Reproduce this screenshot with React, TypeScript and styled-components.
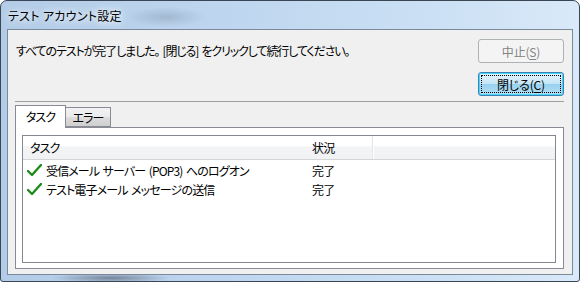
import styled, { createGlobalStyle } from "styled-components"

const GlobalStyle = createGlobalStyle`
    html, body { margin: 0; padding: 0; background: #ffffff; }
    body {
        font-family: "Noto Sans CJK JP", "Noto Sans", sans-serif;
        font-size: 12px;
        font-feature-settings: "palt";
        letter-spacing: -0.85px;
        word-spacing: 1.5px;
        color: #000;
    }
`

type Row = {
    task: string
    status: string
}

const rows: Row[] = [
    { task: "受信メール サーバー (POP3) へのログオン", status: "完了" },
    { task: "テスト電子メール メッセージの送信", status: "完了" },
]

const Window = styled.div`
    box-sizing: border-box;
    width: 580px;
    height: 282px;
    border: 1px solid #3a4654;
    border-radius: 7px 7px 3px 3px;
    padding: 0 6px 6px 6px;
    display: flex;
    flex-direction: column;
    overflow: hidden;
    background:
        radial-gradient(ellipse 60px 5px at 110px 277px, rgba(60, 70, 85, 0.55), transparent),
        radial-gradient(ellipse 40px 10px at 165px 16px, rgba(90, 105, 125, 0.25), transparent),
        linear-gradient(to right, #b3cce7 0%, #bed6ef 40%, #cbe0f4 75%, #d9e9f9 100%);
`
const TitleBar = styled.div`
    height: 28px;
    display: flex;
    align-items: center;
    padding-left: 1px;
`
const Title = styled.span`
    font-size: 12px;
    letter-spacing: 0.3px;
    word-spacing: 0;
    text-shadow: 0 0 6px #ffffff, 0 0 10px #ffffff;
`
const Client = styled.div`
    flex: 1;
    display: flex;
    flex-direction: column;
    border: 1px solid #7b8a9b;
    background: #f0f0f0;
    padding: 9px 8px 5px 7px;
    min-height: 0;
`
const TopRow = styled.div`
    display: flex;
    align-items: flex-start;
`
const Message = styled.div`
    flex: 1;
    line-height: 24px;
    padding-left: 1px;
    letter-spacing: -1.1px;
`
const ButtonColumn = styled.div`
    width: 86px;
    display: flex;
    flex-direction: column;
    gap: 9px;
`
const Button = styled.button<{ $primary?: boolean; $disabled?: boolean }>`
    box-sizing: border-box;
    height: 24px;
    width: 100%;
    font: inherit;
    font-size: 12px;
    letter-spacing: -0.2px;
    border-radius: 3px;
    padding: 0;
    position: relative;
    color: ${p => (p.$disabled ? "#838383" : "#000")};
    border: 1px solid ${p => (p.$primary ? "#3c7fb1" : "#adb2b5")};
    background: ${p =>
        p.$primary
            ? "linear-gradient(#e5f4fc 0%, #c4e5f6 50%, #98d1ef 51%, #b6e0f5 100%)"
            : "#f4f4f4"};
    box-shadow: ${p => (p.$primary ? "inset 0 0 0 1px #48d7fb" : "none")};
    u { text-decoration: underline; text-underline-offset: 2px; }
`
const FocusRing = styled.span`
    position: absolute;
    inset: 2px;
    border: 1px dotted #000;
    pointer-events: none;
`
const Separator = styled.div`
    height: 1px;
    background: #a0a0a0;
    margin: 5px 0 3px 0;
`
const TabStrip = styled.div`
    display: flex;
    align-items: flex-end;
    height: 22px;
    position: relative;
    z-index: 1;
`
const Tab = styled.div<{ $active?: boolean }>`
    box-sizing: border-box;
    display: flex;
    align-items: center;
    justify-content: center;
    border: 1px solid #898c95;
    width: ${p => (p.$active ? "51px" : "46px")};
    height: ${p => (p.$active ? "23px" : "20px")};
    margin-left: ${p => (p.$active ? "0" : "-1px")};
    margin-bottom: ${p => (p.$active ? "-1px" : "0")};
    border-bottom: ${p => (p.$active ? "none" : "1px solid #898c95")};
    background: ${p => (p.$active ? "#ffffff" : "linear-gradient(#f2f2f2 0%, #ebebeb 50%, #dddddd 51%, #cfcfcf 100%)")};
    padding-bottom: ${p => (p.$active ? "2px" : "0")};
    z-index: ${p => (p.$active ? 2 : 1)};
`
const Panel = styled.div`
    flex: 1;
    display: flex;
    border: 1px solid #898c95;
    background: #ffffff;
    padding: 7px 7px 5px 6px;
    min-height: 0;
`
const List = styled.div`
    flex: 1;
    border: 1px solid #828790;
    background: #ffffff;
    display: flex;
    flex-direction: column;
`
const Grid = styled.div<{ $header?: boolean }>`
    display: grid;
    grid-template-columns: 282px 68px 1fr;
    height: ${p => (p.$header ? "23px" : "19px")};
    align-items: center;
    background: ${p => (p.$header ? "linear-gradient(#ffffff 0%, #ffffff 45%, #f3f4f6 46%, #f1f2f4 100%)" : "transparent")};
    border-bottom: ${p => (p.$header ? "1px solid #d5d5d5" : "none")};
    margin-bottom: ${p => (p.$header ? "1px" : "0")};
`
const HeaderCell = styled.div<{ $divider?: boolean }>`
    height: 100%;
    display: flex;
    align-items: center;
    padding-left: 7px;
    box-sizing: border-box;
    border-right: ${p => (p.$divider ? "1px solid #e3e5e8" : "none")};
    box-shadow: ${p => (p.$divider ? "1px 0 0 #ffffff" : "none")};
`
const Cell = styled.div`
    display: flex;
    align-items: center;
    gap: 4px;
    padding-left: 7px;
    white-space: pre;
`
const TaskCell = styled(Cell)`
    padding-left: 4px;
`

const Check = () => (
    <svg width="15" height="13" viewBox="0 0 15 13">
        <path d="M1 7 L5 11 L14 1" fill="none" stroke="#1e8c1e" strokeWidth="2.4" strokeLinecap="round" strokeLinejoin="round" />
    </svg>
)

export default function App() {
    return (
        <>
            <GlobalStyle />
            <Window>
                <TitleBar>
                    <Title>テスト アカウント設定</Title>
                </TitleBar>
                <Client>
                    <TopRow>
                        <Message>すべてのテストが完了しました。 [閉じる] をクリックして続行してください。</Message>
                        <ButtonColumn>
                            <Button $disabled>中止(<u>S</u>)</Button>
                            <Button $primary>
                                閉じる(<u>C</u>)
                                <FocusRing />
                            </Button>
                        </ButtonColumn>
                    </TopRow>
                    <Separator />
                    <TabStrip>
                        <Tab $active>タスク</Tab>
                        <Tab>エラー</Tab>
                    </TabStrip>
                    <Panel>
                        <List>
                            <Grid $header>
                                <HeaderCell>タスク</HeaderCell>
                                <HeaderCell $divider>状況</HeaderCell>
                                <HeaderCell />
                            </Grid>
                            {rows.map(r => (
                                <Grid key={r.task}>
                                    <TaskCell>
                                        <Check />
                                        <span>{r.task}</span>
                                    </TaskCell>
                                    <Cell>{r.status}</Cell>
                                    <Cell />
                                </Grid>
                            ))}
                        </List>
                    </Panel>
                </Client>
            </Window>
        </>
    )
}
